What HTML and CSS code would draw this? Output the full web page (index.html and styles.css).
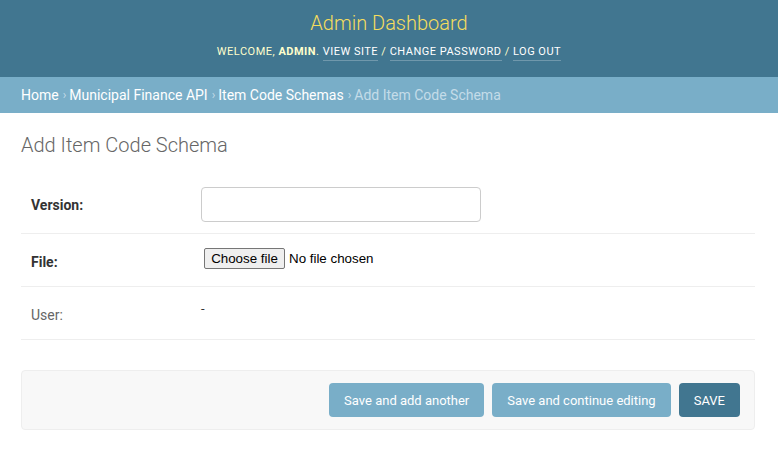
FILE: index.html
```html
<!DOCTYPE html>
<html lang="en">
<head>
<meta charset="utf-8">
<title>Add Item Code Schema | Admin Dashboard</title>
<link rel="stylesheet" href="styles.css">
</head>
<body>
<header class="header">
  <h1 class="site-name"><a href="#">Admin Dashboard</a></h1>
  <div class="user-tools">
    Welcome, <strong>admin</strong>.
    <a href="#">View site</a> /
    <a href="#">Change password</a> /
    <a href="#">Log out</a>
  </div>
</header>
<nav class="breadcrumbs">
  <a href="#">Home</a><span class="sep">›</span><a href="#">Municipal Finance API</a><span class="sep">›</span><a href="#">Item Code Schemas</a><span class="sep">›</span><span class="current">Add Item Code Schema</span>
</nav>
<main class="content">
  <h1 class="page-title">Add Item Code Schema</h1>
  <form class="form">
    <div class="fieldset">
      <div class="form-row">
        <label class="label required" for="id_version">Version:</label>
        <div class="field field-tall"><input class="text-input" type="text" id="id_version"></div>
      </div>
      <div class="form-row">
        <label class="label required" for="id_file">File:</label>
        <div class="field">
          <span class="file-input"><button type="button" class="file-btn">Choose file</button><span class="file-name">No file chosen</span></span>
        </div>
      </div>
      <div class="form-row">
        <label class="label">User:</label>
        <div class="field"><div class="readonly">-</div></div>
      </div>
    </div>
    <div class="submit-row">
      <button type="button" class="btn">Save and add another</button>
      <button type="button" class="btn">Save and continue editing</button>
      <button type="button" class="btn btn-default">SAVE</button>
    </div>
  </form>
</main>
</body>
</html>
```
FILE: styles.css
```css
* { box-sizing: border-box; }
html, body { margin: 0; padding: 0; }
body {
  font-family: Roboto, "Liberation Sans", Arial, sans-serif;
  font-size: 14px;
  color: #333;
  background: #fff;
}
a { text-decoration: none; }

.header {
  background: #417690;
  height: 77px;
  padding-top: 9px;
  display: flex;
  flex-direction: column;
  align-items: center;
}
.site-name {
  margin: 0;
  font-size: 20px;
  font-weight: 300;
  line-height: 28px;
}
.site-name a { color: #f5dd5d; }
.user-tools {
  margin-top: 8px;
  font-size: 11px;
  line-height: 14px;
  letter-spacing: 0.5px;
  text-transform: uppercase;
  color: #ffc;
}
.user-tools strong { font-weight: 700; }
.user-tools a {
  color: #fff;
  border-bottom: 1px solid rgba(255,255,255,0.25);
  padding-bottom: 2px;
}

.breadcrumbs {
  background: #79aec8;
  height: 36px;
  padding: 0 21px;
  display: flex;
  align-items: center;
  font-size: 14px;
  color: #c4dce8;
}
.breadcrumbs a { color: #fff; }
.breadcrumbs .sep { padding: 0 3px 0 4px; font-size: 12px; }
.breadcrumbs .current { color: #c4dce8; }

.content { padding: 20px 23px 20px 21px; }
.page-title {
  margin: 0 0 20px;
  font-size: 20px;
  font-weight: 300;
  line-height: 24px;
  color: #666;
}

.form-row {
  display: flex;
  align-items: flex-start;
  padding: 10px;
  border-bottom: 1px solid #eee;
}
.label {
  width: 170px;
  flex: none;
  padding: 10px 10px 0 0;
  line-height: 17px;
  font-size: 14px;
  color: #666;
}
.label.required { font-weight: 700; color: #333; }
.field { min-height: 32px; flex: 1; }
.field-tall { min-height: 36px; }
.text-input {
  display: block;
  width: 280px;
  height: 35px;
  border: 1px solid #ccc;
  border-radius: 4px;
  padding: 5px 6px;
  font: inherit;
  background: #fff;
}
.file-input {
  display: inline-flex;
  align-items: center;
  margin: 4px 0 0 3px;
  font-family: "Liberation Sans", Arial, sans-serif;
  font-size: 13.33px;
  color: #000;
}
.file-btn {
  height: 21px;
  width: 81px;
  padding: 0;
  margin-right: 4px;
  background: #efefef;
  border: 1px solid #767676;
  border-radius: 2px;
  font: inherit;
  color: #000;
}
.readonly {
  padding-top: 4px;
  font-size: 13px;
  line-height: 16px;
  color: #333;
}

.submit-row {
  margin-top: 30px;
  padding: 12px 14px;
  background: #f8f8f8;
  border: 1px solid #eee;
  border-radius: 4px;
  display: flex;
  justify-content: flex-end;
  gap: 8px;
}
.btn {
  height: 34px;
  padding: 0 15px;
  border: none;
  border-radius: 4px;
  background: #79aec8;
  color: #fff;
  font-family: Roboto, "Liberation Sans", Arial, sans-serif;
  font-size: 13px;
}
.btn-default { background: #417690; }
```
